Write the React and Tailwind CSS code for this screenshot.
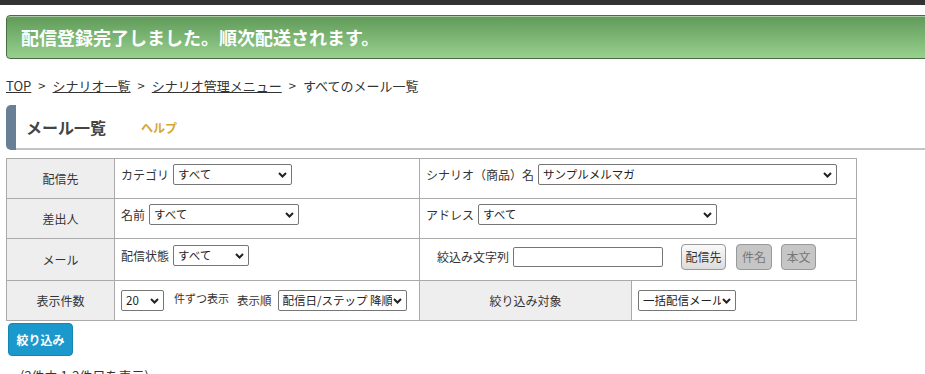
import React from 'react';

const font = { fontFamily: '"Noto Sans CJK JP", "Noto Sans", sans-serif' };

function Chevron() {
  return (
    <svg width="9" height="6" viewBox="0 0 9 6" className="pointer-events-none absolute right-[5px] top-1/2 -translate-y-1/2">
      <path d="M1 1 L4.5 4.5 L8 1" fill="none" stroke="#222" strokeWidth="2" />
    </svg>
  );
}

function Select({ value, width, className = '' }) {
  return (
    <span className={`relative inline-block shrink-0 ${className}`}>
      <select
        defaultValue={value}
        className={`${width} h-[21px] appearance-none rounded-[2px] border border-[#767676] bg-white pl-[4px] pr-[14px] text-[11.5px] leading-[19px] text-[#222] outline-none`}
        style={font}
      >
        <option>{value}</option>
      </select>
      <Chevron />
    </span>
  );
}

function Label({ children }) {
  return (
    <td className="w-[108px] border border-[#aaa] bg-[#eee] text-center align-middle text-[12px] text-[#333]">
      {children}
    </td>
  );
}

export default function App() {
  return (
    <div className="h-[374px] w-[925px] overflow-hidden bg-white text-[#333]" style={font}>
      {/* top bar */}
      <div className="h-[5px] bg-[#333]"></div>

      {/* success banner */}
      <div className="ml-[6px] mr-[-20px] mt-[10px] flex h-[44px] items-center rounded-l-[4px] border border-[#4b6b44] bg-gradient-to-b from-[#609a58] to-[#97d08f] pl-[14px] shadow-[inset_0_1px_0_#a9c9a2]">
        <span className="text-[18px] font-bold text-white">配信登録完了しました。順次配送されます。</span>
      </div>

      {/* breadcrumb */}
      <div className="ml-[6px] mt-[19px] flex items-center gap-[7px] text-[13px] leading-[16px] text-[#333]">
        <a className="underline">TOP</a>
        <span>&gt;</span>
        <a className="underline">シナリオ一覧</a>
        <span>&gt;</span>
        <a className="underline">シナリオ管理メニュー</a>
        <span>&gt;</span>
        <span>すべてのメール一覧</span>
      </div>

      {/* heading */}
      <div className="ml-[6px] mt-[11px] flex h-[45px]">
        <div className="w-[10px] rounded-l-[5px] bg-[#687f95]"></div>
        <div className="flex flex-1 items-center border-b-2 border-[#c4c4c4] pl-[10px]">
          <span className="text-[16px] font-bold text-[#444]">メール一覧</span>
          <span className="ml-[35px] mt-[3px] text-[12px] font-bold text-[#d6a630]">ヘルプ</span>
        </div>
      </div>

      {/* filter table */}
      <table className="ml-[6px] mt-[8px] w-[850px] table-fixed border-collapse text-[12px]">
        <colgroup>
          <col className="w-[108px]" />
          <col className="w-[305px]" />
          <col className="w-[212px]" />
          <col className="w-[225px]" />
        </colgroup>
        <tbody>
          <tr className="h-[40px]">
            <Label>配信先</Label>
            <td className="border border-[#aaa] px-[6px] pt-[5px] align-top">
              <div className="flex items-center whitespace-nowrap">
                <span>カテゴリ</span>
                <Select value="すべて" width="w-[119px]" className="ml-[4px]" />
              </div>
            </td>
            <td colSpan={2} className="border border-[#aaa] px-[6px] pt-[5px] align-top">
              <div className="flex items-center whitespace-nowrap">
                <span>シナリオ（商品）名</span>
                <Select value="サンプルメルマガ" width="w-[299px]" className="ml-[4px]" />
              </div>
            </td>
          </tr>
          <tr className="h-[40px]">
            <Label>差出人</Label>
            <td className="border border-[#aaa] px-[6px] pt-[5px] align-top">
              <div className="flex items-center whitespace-nowrap">
                <span>名前</span>
                <Select value="すべて" width="w-[150px]" className="ml-[4px]" />
              </div>
            </td>
            <td colSpan={2} className="border border-[#aaa] px-[6px] pt-[5px] align-top">
              <div className="flex items-center whitespace-nowrap">
                <span>アドレス</span>
                <Select value="すべて" width="w-[239px]" className="ml-[4px]" />
              </div>
            </td>
          </tr>
          <tr className="h-[42px]">
            <Label>メール</Label>
            <td className="border border-[#aaa] px-[6px] pt-[6px] align-top">
              <div className="flex items-center whitespace-nowrap">
                <span>配信状態</span>
                <Select value="すべて" width="w-[76px]" className="ml-[4px]" />
              </div>
            </td>
            <td colSpan={2} className="border border-[#aaa] pl-[17px] pt-[5px] pb-[8px] align-top">
              <div className="flex items-center whitespace-nowrap">
                <span>絞込み文字列</span>
                <input className="ml-[4px] h-[20px] w-[150px] rounded-[2px] border border-[#767676] outline-none" />
                <button className="ml-[18px] h-[26px] w-[45px] rounded-[4px] border border-[#999] bg-gradient-to-b from-[#fafafa] to-[#dcdcdc] text-[12px] text-[#333]">
                  配信先
                </button>
                <button className="ml-[10px] h-[26px] w-[36px] rounded-[4px] border border-[#999] bg-[#c6c6c6] text-[12px] text-[#777]">
                  件名
                </button>
                <button className="ml-[9px] h-[26px] w-[35px] rounded-[4px] border border-[#999] bg-[#c6c6c6] text-[12px] text-[#777]">
                  本文
                </button>
              </div>
            </td>
          </tr>
          <tr className="h-[40px]">
            <Label>表示件数</Label>
            <td className="border border-[#aaa] px-[6px] align-middle">
              <div className="flex items-center whitespace-nowrap">
                <Select value="20" width="w-[43px]" />
                <span className="ml-[10px] -mt-[5px] text-[11px]">件ずつ表示</span>
                <span className="ml-[8px] text-[11.5px]">表示順</span>
                <Select value="配信日/ステップ 降順" width="w-[129px]" className="ml-[6px]" />
              </div>
            </td>
            <td className="border border-[#aaa] bg-[#eee] text-center align-middle">絞り込み対象</td>
            <td className="border border-[#aaa] px-[6px] align-middle">
              <Select value="一括配信メール" width="w-[98px]" />
            </td>
          </tr>
        </tbody>
      </table>

      {/* submit */}
      <button className="ml-[8px] mt-[2px] h-[33px] w-[65px] rounded-[4px] border border-[#1585b4] bg-[#1b98cc] text-[12px] font-bold text-white">
        絞り込み
      </button>

      <div className="ml-[20px] mt-[10px] text-[13px] text-[#333]">(2件中 1-2件目を表示)</div>
    </div>
  );
}
